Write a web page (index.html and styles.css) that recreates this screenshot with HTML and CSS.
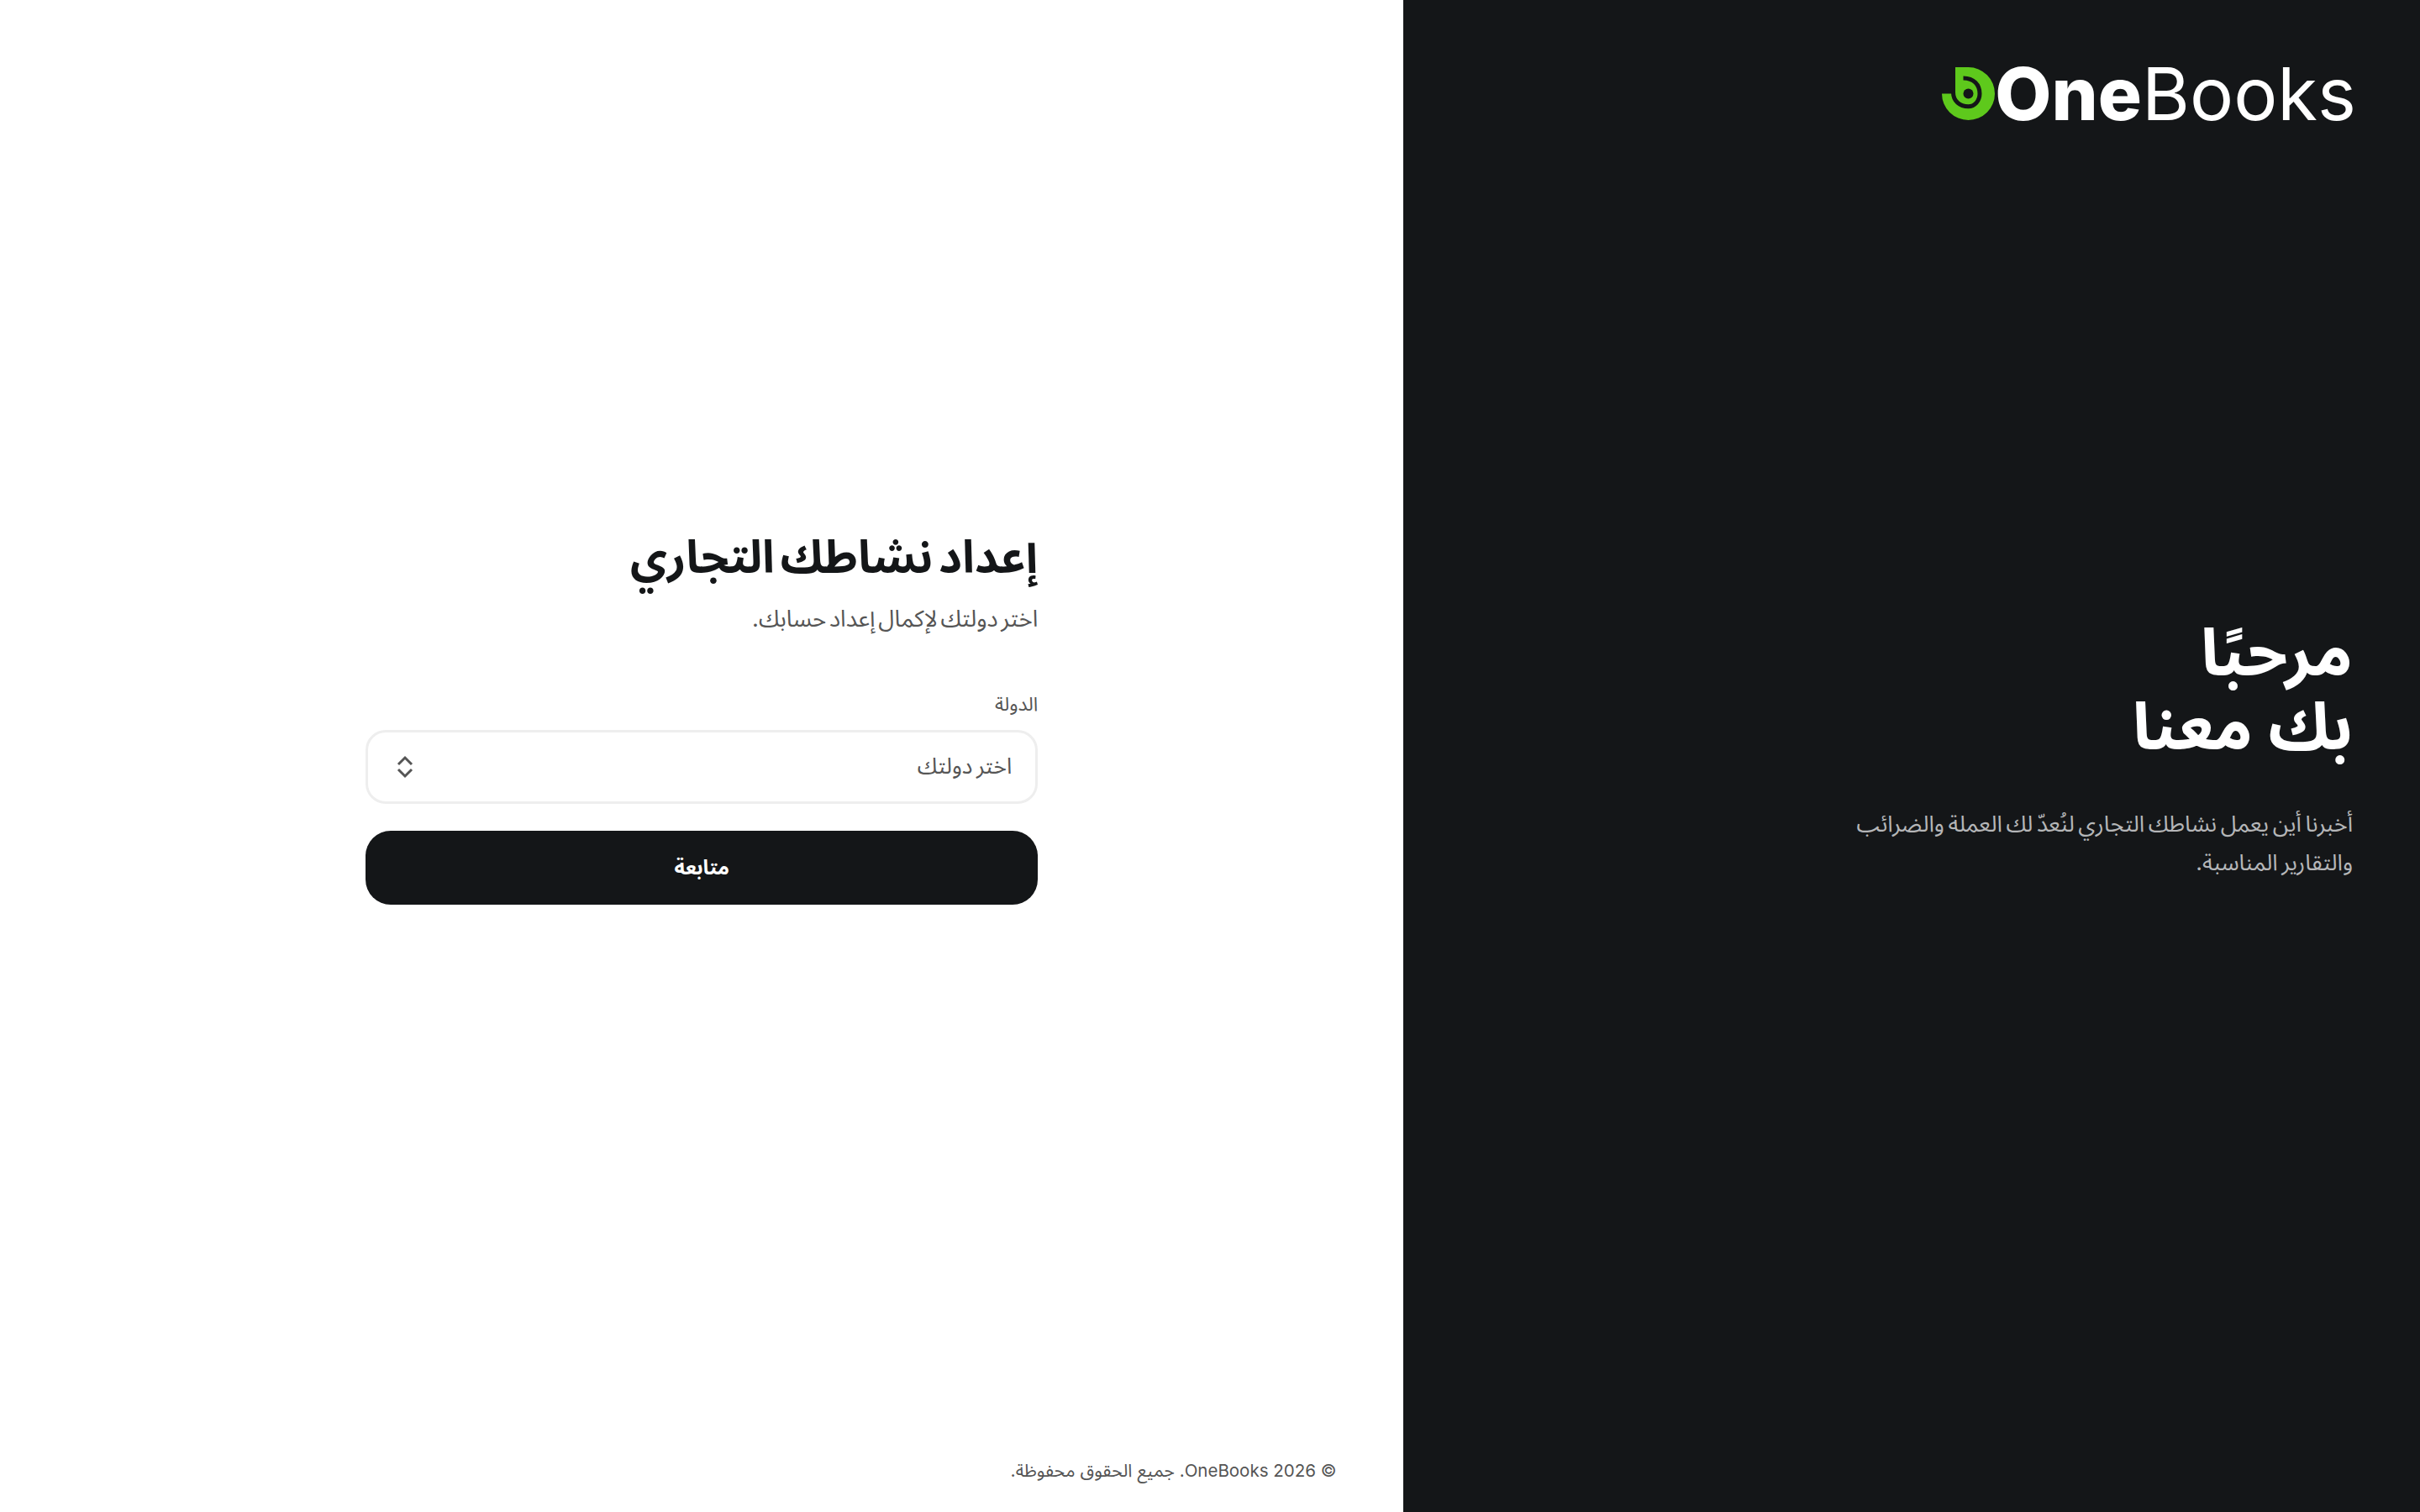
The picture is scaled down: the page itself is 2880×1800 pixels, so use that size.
FILE: index.html
```html
<!DOCTYPE html>
<html lang="ar" dir="rtl">
<head>
    <meta charset="UTF-8">
    <title>OneBooks</title>
    <link rel="stylesheet" href="styles.css">
</head>
<body>

    <!-- اللوحة الداكنة -->
    <aside class="brand-panel">
        <div class="logo">
            <svg class="logo-mark" viewBox="12 20 63 63">
                <path d="M28 20H43.5A31.5 31.5 0 1 1 12 51.5H28Z" fill="#5ec91c"/>
                <path d="M37.5 33C50 33 57 41 57 51.5C57 60 51 66.7 43.5 66.7C33 66.7 25.5 60 25.5 50" fill="none" stroke="#141618" stroke-width="5"/>
                <circle cx="43.5" cy="51.5" r="6" fill="#141618"/>
            </svg>
            <span class="logo-text"><b>One</b>Books</span>
        </div>
        <div class="brand-copy">
            <h2>مرحبًا<br>بك معنا</h2>
            <p>أخبرنا أين يعمل نشاطك التجاري لنُعدّ لك العملة والضرائب والتقارير المناسبة.</p>
        </div>
    </aside>

    <!-- نموذج الإعداد -->
    <main class="form-panel">
        <div class="form-wrap">
            <form class="setup-form">
                <h1>إعداد نشاطك التجاري</h1>
                <p class="subtitle">اختر دولتك لإكمال إعداد حسابك.</p>
                <div class="field-label">الدولة</div>
                <div class="select-box">
                    <span>اختر دولتك</span>
                    <svg class="select-arrows" viewBox="0 0 20 28">
                        <path d="M2 11 10 3 18 11M2 17 10 25 18 17" fill="none" stroke="#555" stroke-width="3"/>
                    </svg>
                </div>
                <button class="submit-btn" type="button">متابعة</button>
            </form>
        </div>
        <footer class="footer">© 2026 OneBooks. <span>جميع الحقوق محفوظة.</span></footer>
    </main>

</body>
</html>
```
FILE: styles.css
```css
* {
    box-sizing: border-box;
}

body {
    display: flex;
    height: 100vh;
    margin: 0;
    overflow: hidden;
    background-color: #fff;
    color: #141618;
    font-family: Inter, "Noto Sans Arabic", "Noto Sans", "DejaVu Sans", sans-serif;
}

.brand-panel {
    width: 42%;
    padding: 80px 80px 161px;
    background-color: #141618;
    color: #fff;
    display: flex;
    flex-direction: column;
}

.logo {
    display: flex;
    align-items: center;
    align-self: flex-start;
    direction: ltr;
    height: 63px;
    margin-right: -4px;
}

.logo-mark {
    width: 63px;
    height: 63px;
}

.logo-text {
    font-size: 87px;
    line-height: 63px;
}

.logo-text b {
    font-weight: 800;
}

.brand-copy {
    flex: 1;
    display: flex;
    flex-direction: column;
    justify-content: center;
}

.brand-copy h2 {
    margin: 0;
    font-size: 78px;
    line-height: 88px;
    font-weight: 700;
}

.brand-copy p {
    margin: 50px 0 0;
    max-width: 620px;
    font-size: 27px;
    line-height: 46px;
    word-spacing: -3px;
    color: #b5b6b8;
}

.form-panel {
    flex: 1;
    padding: 0 80px 34px;
    display: flex;
    flex-direction: column;
}

.form-wrap {
    flex: 1;
    display: flex;
    align-items: center;
    justify-content: center;
}

.setup-form {
    width: 800px;
    margin-top: -31px;
}

.setup-form h1 {
    margin: 0;
    font-size: 54px;
    line-height: 72px;
    font-weight: 700;
    word-spacing: -6px;
}

.subtitle {
    margin: 15px 0 0;
    font-size: 27.5px;
    line-height: 44px;
    word-spacing: -4px;
    color: #555;
}

.field-label {
    margin-top: 65px;
    font-size: 23px;
    line-height: 30px;
    color: #555;
}

.select-box {
    height: 88px;
    margin-top: 16px;
    padding: 0 28px 0 34px;
    border: 3px solid #eee;
    border-radius: 24px;
    display: flex;
    align-items: center;
    justify-content: space-between;
    font-size: 26.5px;
    word-spacing: -3px;
    color: #555;
}

.select-arrows {
    width: 20px;
    height: 28px;
}

.submit-btn {
    display: block;
    width: 100%;
    height: 88px;
    margin-top: 32px;
    border: none;
    border-radius: 30px;
    background-color: #141618;
    color: #fff;
    font-family: inherit;
    font-size: 24px;
    font-weight: 700;
}

.footer {
    font-size: 20.5px;
    line-height: 30px;
    color: #555;
}

.footer span {
    font-size: 21.5px;
}
```
